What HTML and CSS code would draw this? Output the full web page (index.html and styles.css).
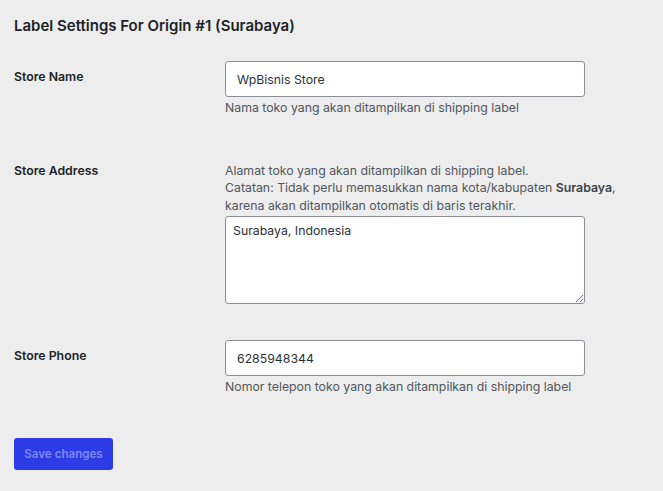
FILE: index.html
```html
<!DOCTYPE html>
<html lang="id">
<head>
<meta charset="utf-8">
<title>Label Settings</title>
<link rel="stylesheet" href="styles.css">
</head>
<body>
<div class="page">
  <h2 class="title">Label Settings For Origin #1 (Surabaya)</h2>

  <div class="row row-name">
    <label class="label label-input" for="store-name">Store Name</label>
    <div class="field">
      <input id="store-name" class="text-input" type="text" value="WpBisnis Store">
      <p class="desc desc-after">Nama toko yang akan ditampilkan di shipping label</p>
    </div>
  </div>

  <div class="row row-address">
    <label class="label" for="store-address">Store Address</label>
    <div class="field">
      <p class="desc">Alamat toko yang akan ditampilkan di shipping label.<br>Catatan: Tidak perlu memasukkan nama kota/kabupaten <strong>Surabaya</strong>,<br>karena akan ditampilkan otomatis di baris terakhir.</p>
      <textarea id="store-address" class="text-area">Surabaya, Indonesia</textarea>
    </div>
  </div>

  <div class="row row-phone">
    <label class="label label-input" for="store-phone">Store Phone</label>
    <div class="field">
      <input id="store-phone" class="text-input" type="text" value="6285948344">
      <p class="desc desc-after">Nomor telepon toko yang akan ditampilkan di shipping label</p>
    </div>
  </div>

  <button class="save-btn" type="button">Save changes</button>
</div>
</body>
</html>
```

FILE: styles.css
```css
html, body {
  margin: 0;
  padding: 0;
  background: #ededed;
}

body {
  font-family: Inter, "Noto Sans", "Liberation Sans", sans-serif;
  font-size: 12.3px;
  color: #1d2327;
  height: 491px;
  overflow: hidden;
}

.page {
  padding: 0 14px;
}

.title {
  margin: 0;
  padding-top: 16px;
  font-size: 15px;
  line-height: 20px;
  font-weight: 600;
  color: #1d2327;
}

.row {
  display: grid;
  grid-template-columns: 211px 360px;
  align-items: start;
}

.row-name {
  margin-top: 25px;
}

.row-address {
  margin-top: 44.8px;
}

.row-phone {
  margin-top: 36px;
}

.label {
  font-weight: 600;
  font-size: 12.3px;
  line-height: 17.7px;
  color: #1d2327;
}

.label-input {
  padding-top: 7.15px;
}

.field {
  display: flex;
  flex-direction: column;
}

.text-input {
  box-sizing: border-box;
  width: 360px;
  height: 36px;
  margin: 0;
  padding: 0 11px;
  border: 1px solid #8c8f94;
  border-radius: 3px;
  background: #fff;
  font-family: inherit;
  font-size: 12.3px;
  color: #2c3338;
  outline: none;
}

.desc {
  margin: 0;
  font-size: 12.3px;
  line-height: 17.7px;
  color: #50575e;
  white-space: nowrap;
}

.desc strong {
  font-weight: 600;
  color: #3c434a;
}

.desc-after {
  margin-top: 2.15px;
}

.text-area {
  box-sizing: border-box;
  width: 360px;
  height: 88px;
  margin: 1.25px 0 0;
  padding: 5px 7px;
  border: 1px solid #8c8f94;
  border-radius: 3px;
  background: #fff;
  font-family: inherit;
  font-size: 12.3px;
  line-height: 17.7px;
  color: #2c3338;
  resize: vertical;
  outline: none;
}

.save-btn {
  display: block;
  box-sizing: border-box;
  margin-top: 42.15px;
  width: 99px;
  height: 32px;
  padding: 0;
  border: none;
  border-radius: 3px;
  background: #2c3be6;
  color: #7d88f0;
  font-family: inherit;
  font-size: 11.6px;
  font-weight: 600;
}
```
